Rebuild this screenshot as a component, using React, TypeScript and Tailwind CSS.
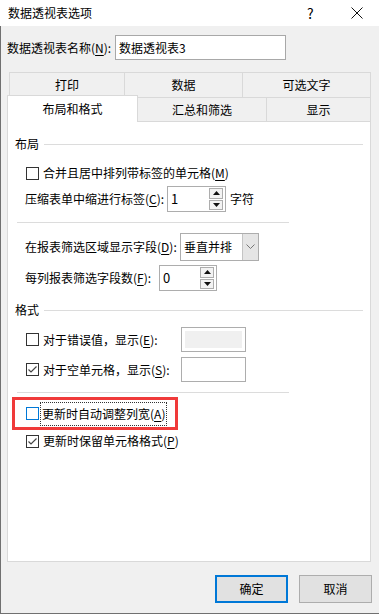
import React from 'react';

const font = { fontFamily: '"Noto Sans CJK SC", "Microsoft YaHei", sans-serif' };

function Acc({ k }: { k: string }) {
    return (
        <span>
            (<span className="underline underline-offset-2">{k}</span>)
        </span>
    );
}

function Checkbox({ checked = false, focus = false }: { checked?: boolean; focus?: boolean }) {
    return (
        <div
            className={`w-[13px] h-[13px] shrink-0 bg-white border flex items-center justify-center ${
                focus ? 'border-[#0078d7]' : 'border-[#333333]'
            }`}
        >
            {checked && (
                <svg width="11" height="11" viewBox="0 0 11 11">
                    <polyline points="1.5,5.5 4,8 9.5,2.5" fill="none" stroke="#444" strokeWidth="1.2" />
                </svg>
            )}
        </div>
    );
}

function SpinBox({ value, width }: { value: string; width: string }) {
    return (
        <div className={`${width} h-[26px] bg-white border border-[#adadad] flex items-center`}>
            <span className="flex-1 pl-[3px] text-[13px]">{value}</span>
            <div className="flex flex-col gap-[1px] mr-[2px] h-[22px]">
                <div className="w-[14px] flex-1 border border-[#adadad] bg-[#f3f3f3] flex items-center justify-center">
                    <svg width="7" height="4" viewBox="0 0 7 4"><polygon points="0,4 7,4 3.5,0" fill="#111" /></svg>
                </div>
                <div className="w-[14px] flex-1 border border-[#adadad] bg-[#f3f3f3] flex items-center justify-center">
                    <svg width="7" height="4" viewBox="0 0 7 4"><polygon points="0,0 7,0 3.5,4" fill="#111" /></svg>
                </div>
            </div>
        </div>
    );
}

function SectionHead({ label }: { label: string }) {
    return (
        <div className="h-[20px] flex items-center pl-[7px] pr-[7px]">
            <span>{label}</span>
            <div className="flex-1 h-px bg-[#dcdcdc] ml-[5px]"></div>
        </div>
    );
}

export default function App() {
    return (
        <div className="w-[379px] h-[616px] bg-white text-[12px] text-black overflow-hidden" style={font}>
            {/* title bar */}
            <div className="h-[26px] bg-white flex items-center pl-[8px] relative">
                <span>数据透视表选项</span>
                <span className="absolute left-[307px] top-[3px] text-[14px]">?</span>
                <svg className="absolute left-[351px] top-[7px]" width="12" height="12" viewBox="0 0 12 12">
                    <path d="M0.5 0.5 L11.5 11.5 M11.5 0.5 L0.5 11.5" stroke="#111" strokeWidth="1" />
                </svg>
            </div>

            {/* body */}
            <div className="h-[588px] bg-[#f0f0f0] border-l border-b border-[#707070] flex flex-col">
                <div className="mt-[9px] flex items-center pl-[6px]">
                    <span className="w-[108px]">
                        数据透视表名称<Acc k="N" />:
                    </span>
                    <div className="w-[171px] h-[25px] bg-white border border-[#a8a8a8] flex items-center pl-[3px]">
                        数据透视表3
                    </div>
                </div>

                {/* tabs */}
                <div className="mt-[12px] ml-[8px] flex h-[25px]">
                    <div className="w-[115px] border-t border-l border-[#d9d9d9] flex items-center justify-center">打印</div>
                    <div className="w-[118px] border-t border-l border-[#d9d9d9] flex items-center justify-center">数据</div>
                    <div className="w-[129px] border-t border-l border-r border-[#d9d9d9] flex items-center justify-center">可选文字</div>
                </div>
                <div className="-mt-[2px] ml-[6px] flex items-end h-[27px] relative">
                    <div className="w-[131px] h-[27px] bg-white border-t border-l border-r border-[#d9d9d9] flex items-center justify-center pb-[1px]">
                        布局和格式
                    </div>
                    <div className="w-[128px] h-[25px] border-t border-b border-[#d9d9d9] flex items-center justify-center">汇总和筛选</div>
                    <div className="w-[105px] h-[25px] border-t border-l border-r border-b border-[#d9d9d9] flex items-center justify-center">显示</div>
                </div>

                {/* panel */}
                <div className="ml-[6px] w-[364px] h-[440px] bg-white border-l border-r border-b border-[#d9d9d9] flex flex-col">
                    <div className="mt-[12px]"><SectionHead label="布局" /></div>

                    <div className="mt-[9px] h-[20px] flex items-center pl-[18px] gap-[4px]">
                        <Checkbox />
                        <span>合并且居中排列带标签的单元格<Acc k="M" /></span>
                    </div>

                    <div className="mt-[3px] h-[26px] flex items-center pl-[17px]">
                        <span className="w-[142px]">压缩表单中缩进行标签<Acc k="C" />:</span>
                        <SpinBox value="1" width="w-[59px]" />
                        <span className="ml-[4px]">字符</span>
                    </div>

                    <div className="mt-[10px] ml-[9px] w-[272px] h-px bg-[#dcdcdc]"></div>

                    <div className="mt-[10px] h-[28px] flex items-center pl-[17px]">
                        <span className="w-[155px]">在报表筛选区域显示字段<Acc k="D" />:</span>
                        <div className="w-[79px] h-[28px] bg-white border border-[#adadad] flex items-center">
                            <span className="flex-1 pl-[3px]">垂直并排</span>
                            <div className="w-[16px] h-full bg-[#e5e5e5] border-l border-[#c4c4c4] flex items-center justify-center">
                                <svg width="9" height="6" viewBox="0 0 9 6">
                                    <polyline points="0.5,0.5 4.5,4.5 8.5,0.5" fill="none" stroke="#777" strokeWidth="1" />
                                </svg>
                            </div>
                        </div>
                    </div>

                    <div className="mt-[4px] h-[26px] flex items-center pl-[17px]">
                        <span className="w-[134px]">每列报表筛选字段数<Acc k="F" />:</span>
                        <SpinBox value="0" width="w-[58px]" />
                    </div>

                    <div className="mt-[9px]"><SectionHead label="格式" /></div>

                    <div className="mt-[7px] h-[25px] flex items-center pl-[18px]">
                        <Checkbox />
                        <span className="ml-[4px] w-[138px]">对于错误值，显示<Acc k="E" />:</span>
                        <div className="w-[65px] h-[25px] border border-[#adadad] bg-white p-[3px]">
                            <div className="w-full h-full bg-[#f0f0f0]"></div>
                        </div>
                    </div>

                    <div className="mt-[5px] h-[25px] flex items-center pl-[18px]">
                        <Checkbox checked />
                        <span className="ml-[4px] w-[138px]">对于空单元格，显示<Acc k="S" />:</span>
                        <div className="w-[65px] h-[25px] border border-[#adadad] bg-white"></div>
                    </div>

                    <div className="mt-[10px] ml-[9px] w-[272px] h-px bg-[#dcdcdc]"></div>

                    <div className="mt-[4px] ml-[4px] w-[166px] h-[33px] border-[3px] border-[#f03a3a] flex items-center pl-[11px]">
                        <Checkbox focus />
                        <span className="ml-[2px] px-[1px] py-[2px] outline-1 outline-dotted outline-[#333]">
                            更新时自动调整列宽<Acc k="A" />
                        </span>
                    </div>

                    <div className="mt-[1px] h-[20px] flex items-center pl-[18px] gap-[4px]">
                        <Checkbox checked />
                        <span>更新时保留单元格格式<Acc k="P" /></span>
                    </div>
                </div>

                {/* buttons */}
                <div className="mt-[13px] flex justify-end gap-[11px] pr-[7px]">
                    <button className="w-[73px] h-[28px] bg-[#e1e1e1] border-2 border-[#0078d7] flex items-center justify-center">确定</button>
                    <button className="w-[73px] h-[28px] bg-[#e1e1e1] border border-[#adadad] flex items-center justify-center">取消</button>
                </div>
            </div>
        </div>
    );
}
